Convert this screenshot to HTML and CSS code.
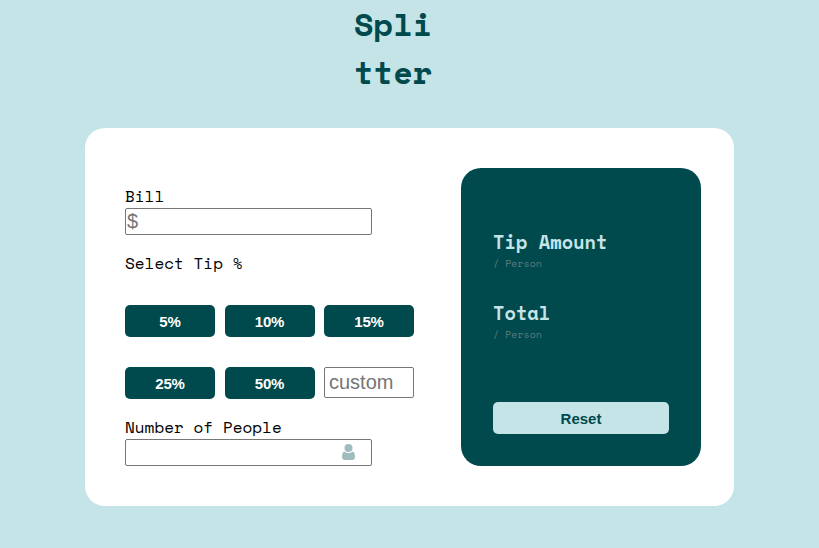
FILE: index.html
```html
<!DOCTYPE html>
<html lang="en">
<head>
<meta charset="utf-8">
<title>Splitter</title>
<link rel="stylesheet" href="styles.css">
</head>
<body>
<h1 class="title">Spli<br>tter</h1>
<main class="card">
  <form class="form">
    <label class="label" for="bill">Bill</label>
    <input class="field" id="bill" type="text" placeholder="$">
    <p class="label tip-label">Select Tip %</p>
    <div class="tips">
      <button class="tip" type="button">5%</button>
      <button class="tip" type="button">10%</button>
      <button class="tip" type="button">15%</button>
      <button class="tip" type="button">25%</button>
      <button class="tip" type="button">50%</button>
      <input class="custom" type="text" placeholder="custom">
    </div>
    <label class="label people-label" for="people">Number of People</label>
    <div class="people">
      <input class="field" id="people" type="text">
      <svg class="person" viewBox="0 0 13 16" width="13" height="16"><g fill="#9fbcbf"><circle cx="6.5" cy="4" r="4"/><path d="M2.500 7.500C3.600 8.500 5 9.100 6.500 9.100s2.900-.6 4-1.600c1.800.4 2.500 2.600 2.500 5.300 0 2-1 3.200-2.500 3.200h-8C1 16 0 14.800 0 12.800c0-2.700.7-4.900 2.500-5.300Z"/></g></svg>
    </div>
  </form>
  <section class="result">
    <h2 class="heading">Tip Amount</h2>
    <p class="per">/ Person</p>
    <h2 class="heading total">Total</h2>
    <p class="per">/ Person</p>
    <button class="reset" type="button">Reset</button>
  </section>
</main>
</body>
</html>
```
FILE: styles.css
```css
* { box-sizing: border-box; }
body {
  margin: 0;
  min-height: 548px;
  background: #c5e4e7;
  font-family: "Space Mono", "Liberation Mono", monospace;
  font-size: 16px;
  overflow: hidden;
}
.title {
  width: 79px;
  height: 96px;
  margin: 0 0 32px 354px;
  font-size: 32px;
  line-height: 48px;
  color: #00494d;
}
.card {
  display: flex;
  justify-content: space-between;
  width: 649px;
  height: 378px;
  margin-left: 85px;
  padding: 40px 33px 40px 40px;
  border-radius: 20px;
  background: #fff;
}
.form { width: 289px; padding-top: 16px; }
.label { display: block; height: 24px; margin: 0; line-height: 24px; color: #000; }
.field {
  display: block;
  width: 247px;
  height: 27px;
  padding: 1px;
  border: 1px solid #767676;
  border-radius: 2px;
  background: #fff;
  font: 20px "Liberation Sans", Arial, sans-serif;
}
.field::placeholder, .custom::placeholder { color: #757575; }
.tip-label { margin: 16px 0 30px; }
.tips {
  display: grid;
  grid-template-columns: repeat(3, 90px);
  justify-content: space-between;
  row-gap: 30px;
}
.tip, .reset {
  height: 32px;
  padding: 0;
  border: 0;
  border-radius: 5px;
  background: #00494d;
  color: #fff;
  font: bold 15px "Liberation Sans", Arial, sans-serif;
}
.tip { letter-spacing: -0.2px; }
.custom {
  width: 90px;
  height: 31px;
  padding: 0 3px 0 4px;
  border: 1px solid #767676;
  border-radius: 2px;
  background: #fff;
  font: 20px "Liberation Sans", Arial, sans-serif;
}
.people-label { margin-top: 16px; }
.people { position: relative; width: 247px; }
.person { position: absolute; right: 17px; top: 5px; }
.result {
  display: flex;
  flex-direction: column;
  width: 240px;
  height: 298px;
  padding: 60px 32px 32px;
  border-radius: 20px;
  background: #00494d;
}
.heading {
  margin: 0;
  font-size: 18.72px;
  line-height: 28px;
  color: #c5e4e7;
}
.per { margin: 0; font-size: 10px; line-height: 15px; color: #5e7a7d; }
.total { margin-top: 28px; }
.reset { margin-top: auto; background: #c5e4e7; color: #00494d; }
```
